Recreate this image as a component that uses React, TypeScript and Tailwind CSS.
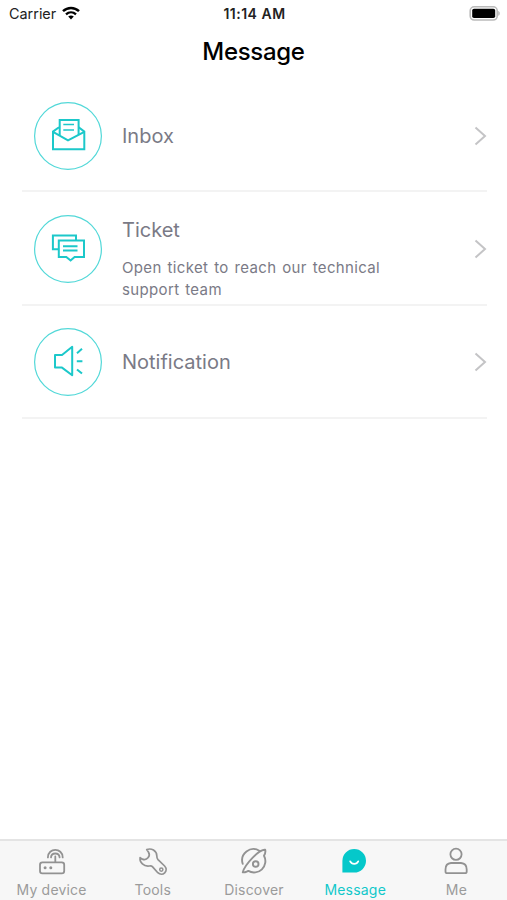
import React from "react";

type RowProps = {
  title: string;
  description?: string;
  icon: React.ReactNode;
};

// Teal line icons, drawn inside a 68px circle
const IconCircle = ({ children }: { children: React.ReactNode }) => (
  <svg
    width="68"
    height="68"
    viewBox="0 0 68 68"
    fill="none"
    stroke="#1cc8ca"
    strokeWidth="2"
    className="ml-3 shrink-0"
  >
    <circle cx="34" cy="34" r="33.4" stroke="#52d8d8" strokeWidth="1.2" />
    {children}
  </svg>
);

const InboxIcon = () => (
  <IconCircle>
    <path d="M25 25.3 19 29.6V47.2H50.3V29.6L44.7 25.3" />
    <path d="M19 29.8 34 38.3 50.3 29.8" />
    <path d="M25.7 33V18H44.6V33" />
    <path d="M29.3 22.5H40M29.3 28H40" strokeWidth="1.7" />
  </IconCircle>
);

const TicketIcon = () => (
  <IconCircle>
    <path d="M24 34.3H18.9V20.4H42V25" />
    <path d="M24.8 25.5H50V41.9H40.6L36.6 45.5 32.3 41.9H24.8Z" />
    <path d="M29 31.2H43.5M29 35.5H43.5" />
  </IconCircle>
);

const NotificationIcon = () => (
  <IconCircle>
    <path d="M21 27H28L38.2 18.8V47.2L28 39.6H21Z" strokeLinejoin="round" />
    <path d="M43 25.2 48 20.8M42.8 33.3H48.4M43 41.4 48 45.6" />
  </IconCircle>
);

const Row = ({ title, description, icon }: RowProps) => (
  <li className="flex h-[113.4px] items-center border-b-2 border-[#f3f3f3] pt-[2px]">
    {icon}
    <div className="ml-5 flex-1 text-[#7a7a86]">
      <h2
        className={
          description
            ? "mt-[21px] text-[20px] leading-6"
            : "text-[20px] leading-6"
        }
      >
        {title}
      </h2>
      {description && (
        <p className="mt-[15px] w-[275px] text-[15px] leading-[22px] tracking-[0.35px] [word-spacing:1.3px]">
          {description}
        </p>
      )}
    </div>
    <svg width="14" height="20" viewBox="0 0 14 20" fill="none">
      <path d="M2.5 1.5 12 10 2.5 18.5" stroke="#c4c4c6" strokeWidth="2" />
    </svg>
  </li>
);

const StatusBar = () => (
  <div className="grid h-7 grid-cols-3 items-center pl-[9px] pr-[7px] text-[14px] text-[#222]">
    <div className="flex items-center gap-[6px]">
      <span className="text-[14.4px]">Carrier</span>
      <svg width="18" height="14" viewBox="0 0 18 14" fill="none" className="-mt-[2px]">
        <path d="M1 5.1C5.6.8 12.4.8 17 5.1" stroke="#000" strokeWidth="2.5" />
        <path d="M4 8.3c2.9-2.7 7.1-2.7 10 0" stroke="#000" strokeWidth="2.3" />
        <path d="M6.2 10.6c1.7-1.4 3.9-1.4 5.6 0L9 13.5Z" fill="#000" />
      </svg>
    </div>
    <span className="-mt-px text-center text-[14px] font-semibold tracking-[0.5px]">
      11:14 AM
    </span>
    <svg width="31" height="15" viewBox="0 0 31 15" className="-mt-[2px] justify-self-end">
      <rect x="1.2" y=".8" width="27" height="13.2" rx="4" fill="#fff" stroke="#bababa" strokeWidth="1.6" />
      <rect x="3.2" y="2.8" width="23" height="9.2" rx="1.8" fill="#000" />
      <path d="M29.2 5c2.1.6 2.1 4.2 0 4.8Z" fill="#bababa" />
    </svg>
  </div>
);

const TabIcon = ({ children }: { children: React.ReactNode }) => (
  <svg
    width="30"
    height="30"
    viewBox="0 0 30 30"
    fill="none"
    stroke="#929292"
    strokeWidth="1.8"
    strokeLinecap="round"
    strokeLinejoin="round"
  >
    {children}
  </svg>
);

const tabs = [
  {
    label: "My device",
    icon: (
      <TabIcon>
        <rect x="3" y="16.4" width="24.2" height="11" rx="2.4" />
        <path d="M18.3 16V10.5M14 11.4c.3-5.2 8.3-5.2 8.6 0M10.9 11.4c.2-10 14.6-10 14.8 0" />
        <g fill="#929292" stroke="none">
          <circle cx="8.1" cy="21.8" r="1.5" />
          <circle cx="13.8" cy="21.8" r="1.5" />
        </g>
      </TabIcon>
    ),
  },
  {
    label: "Tools",
    icon: (
      <TabIcon>
        <path d="M8.7 3.6C13.5 1.7 18.6 4.8 18.8 9.7Q18.8 12.4 20 13.7L26.6 20C31.1 24.9 24.6 31.2 19.8 26.7L14.4 20.6Q13.3 19.5 11.2 20C5.8 20.6 1.5 16.8 2.1 11.6L4.3 13.1Q7.8 14.4 10 11.8 12.4 9 10.4 6Z" strokeWidth="1.7" />
        <circle cx="23.3" cy="23.6" r="1.6" strokeWidth="1.5" />
      </TabIcon>
    ),
  },
  {
    label: "Discover",
    icon: (
      <TabIcon>
        <path d="M3.7 17.8A11.3 11.3 0 0 1 20.3 4.7" strokeWidth="1.9" />
        <path d="M26.2 3.8C23 3.3 18.2 7 13.7 11.6 8.6 16.9 4.6 22.2 3.8 26.3 5.8 26.8 7.5 25.5 9.3 24.9A11.3 11.3 0 0 0 25 9.8C26.2 7.8 26.7 5.6 26.2 3.8Z" strokeWidth="1.9" />
        <circle cx="16.7" cy="18" r="2.8" strokeWidth="1.9" />
      </TabIcon>
    ),
  },
  {
    label: "Message",
    active: true,
    icon: (
      <TabIcon>
        <path d="M2.4 26.6V14.8A11.8 11.8 0 1 1 14.2 26.6Z" fill="#05c8ca" stroke="none" />
        <path d="M10.2 15.4c1.6 3.3 6.4 3.3 8 0" stroke="#fff" strokeWidth="1.8" />
      </TabIcon>
    ),
  },
  {
    label: "Me",
    icon: (
      <TabIcon>
        <circle cx="15" cy="8.3" r="5.6" />
        <path d="M10 17H20Q25.7 17.4 25.7 23.5V25.4Q25.7 27.2 23.9 27.2H6.3Q4.5 27.2 4.5 25.4V23.5Q4.5 17.4 10 17Z" />
      </TabIcon>
    ),
  },
];

const TabBar = () => (
  <nav className="grid h-[61px] grid-cols-5 border-t-2 border-[#e4e4e4] bg-[#f7f7f7] pl-px">
    {tabs.map((tab) => (
      <div key={tab.label} className="flex flex-col items-center pt-[5px]">
        {tab.icon}
        <span
          className={
            tab.active
              ? "mt-[5px] whitespace-nowrap text-[14px] leading-[18px] tracking-[0.2px] text-[#12c8ca]"
              : "mt-[5px] whitespace-nowrap text-[14px] leading-[18px] tracking-[0.2px] text-[#9b9b9b]"
          }
        >
          {tab.label}
        </span>
      </div>
    ))}
  </nav>
);

export default function App() {
  return (
    <div className="flex h-[900px] w-full flex-col overflow-hidden bg-white font-['Inter',sans-serif]">
      <StatusBar />
      <h1 className="mt-2 text-center text-[24px] font-medium leading-8 tracking-[-0.3px] text-black">
        Message
      </h1>
      <ul className="ml-[22px] mr-5 mt-[11px]">
        <Row title="Inbox" icon={<InboxIcon />} />
        <Row
          title="Ticket"
          description="Open ticket to reach our technical support team"
          icon={<TicketIcon />}
        />
        <Row title="Notification" icon={<NotificationIcon />} />
      </ul>
      <div className="flex-1" />
      <TabBar />
    </div>
  );
}
